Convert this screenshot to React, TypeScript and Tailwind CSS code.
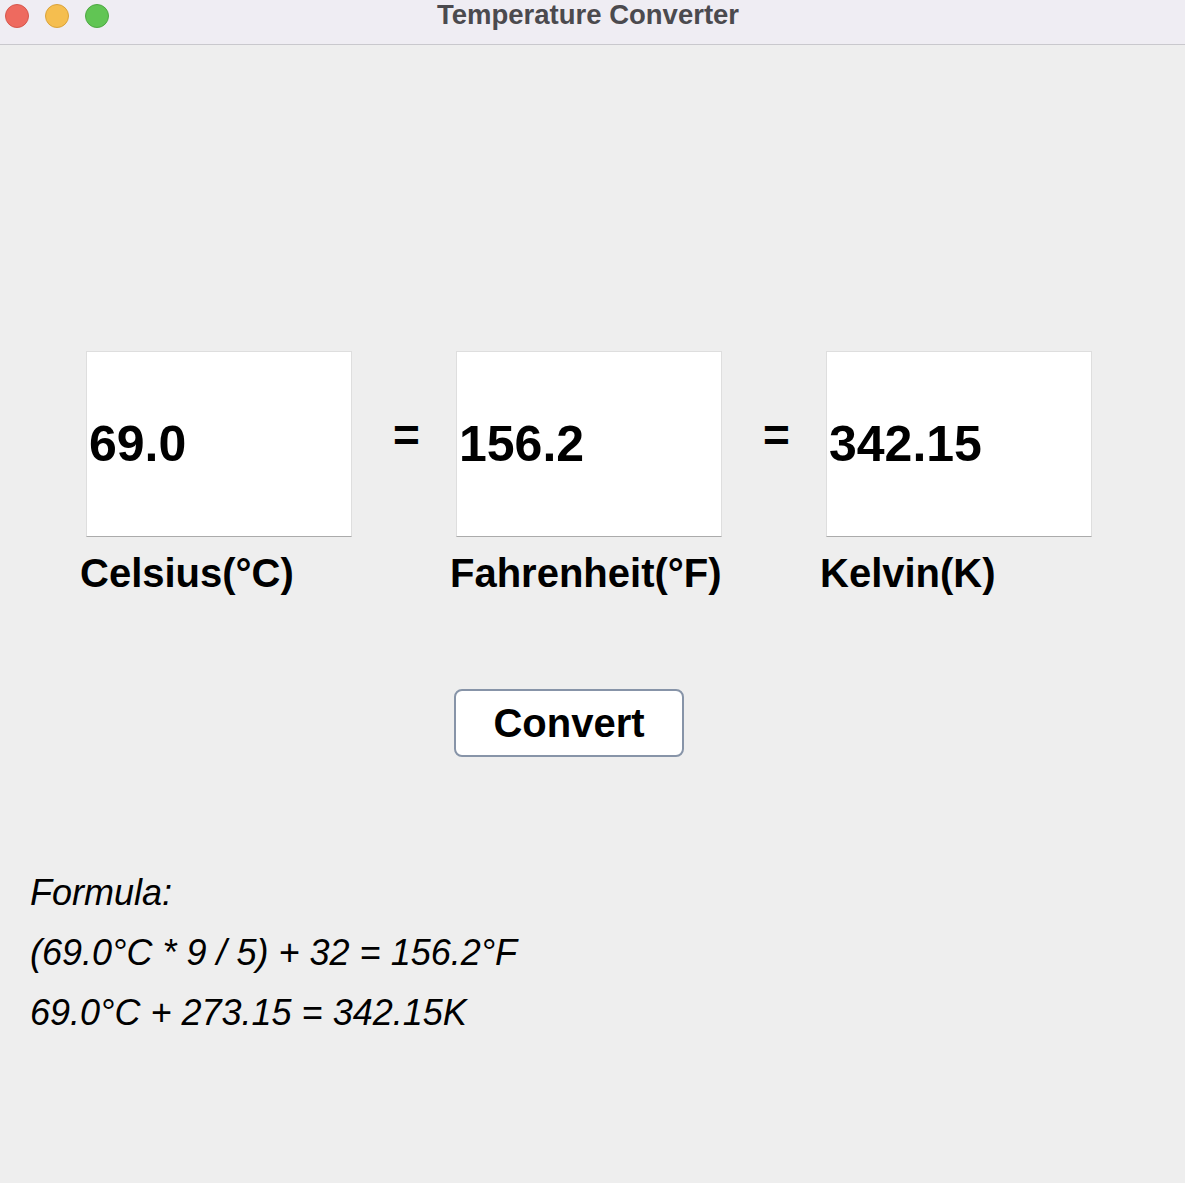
import { useState } from "react";

type Reading = {
  value: string;
  label: string;
};

const FONT = "font-['Liberation_Sans',Arial,sans-serif]";

export default function App() {
  const [celsius] = useState(69.0);

  const fahrenheit = (celsius * 9) / 5 + 32;
  const kelvin = celsius + 273.15;

  const readings: Reading[] = [
    { value: celsius.toFixed(1), label: "Celsius(°C)" },
    { value: fahrenheit.toFixed(1), label: "Fahrenheit(°F)" },
    { value: kelvin.toFixed(2), label: "Kelvin(K)" },
  ];

  return (
    <div className={`${FONT} flex h-[1183px] w-full flex-col bg-[#eeeeee] text-black`}>
      {/* Window title bar */}
      <div className="grid h-[45px] shrink-0 grid-cols-[1fr_auto_1fr] border-b border-[#c9c8cd] bg-[#efedf3]">
        <div className="flex gap-[16px] pl-[5px] pt-[4px]">
          <span className="h-[24px] w-[24px] rounded-full border border-[#d6574c] bg-[#ee6a5f]" />
          <span className="h-[24px] w-[24px] rounded-full border border-[#daa33a] bg-[#f5be4f]" />
          <span className="h-[24px] w-[24px] rounded-full border border-[#4ea843] bg-[#61c554]" />
        </div>
        <p className="-ml-[9px] pt-[1px] text-[27.5px] font-bold leading-none text-[#4b4a4e]">
          Temperature Converter
        </p>
        <div />
      </div>

      {/* Value boxes */}
      <div className="flex pl-[86px] pt-[306px]">
        {readings.map((reading, index) => (
          <div key={reading.label} className="flex items-start">
            {index > 0 && (
              <span className="w-[104px] pl-[5px] pt-[61px] text-center text-[46px] font-bold leading-none">
                =
              </span>
            )}
            <div className="flex flex-col">
              <div className="flex h-[186px] w-[266px] items-center border border-[#dedede] border-b-[#ababab] bg-white pl-[2px]">
                <span className="text-[50px] font-bold">{reading.value}</span>
              </div>
              <p className="-ml-[6px] mt-[16px] whitespace-nowrap text-[40px] font-bold leading-none">
                {reading.label}
              </p>
            </div>
          </div>
        ))}
      </div>

      {/* Convert */}
      <div className="pl-[454px] pt-[96px]">
        <button
          type="button"
          className="flex h-[68px] w-[230px] items-center justify-center rounded-[8px] border-2 border-[#8794a8] bg-white text-[40px] font-bold leading-none"
        >
          Convert
        </button>
      </div>

      {/* Formula */}
      <div className="pl-[30px] pt-[106px] text-[36px] italic leading-[60px]">
        <p>Formula:</p>
        <p>
          ({celsius.toFixed(1)}°C * 9 / 5) + 32 = {fahrenheit.toFixed(1)}°F
        </p>
        <p>
          {celsius.toFixed(1)}°C + 273.15 = {kelvin.toFixed(2)}K
        </p>
      </div>
    </div>
  );
}
